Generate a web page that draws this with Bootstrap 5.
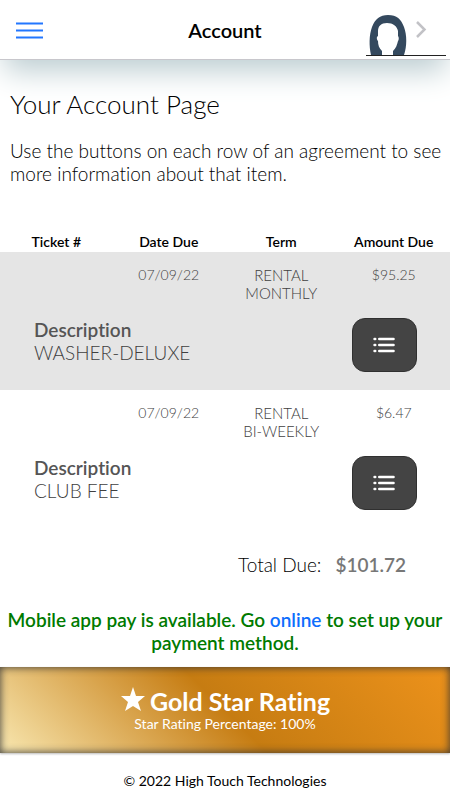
<!DOCTYPE html>
<html lang="en">
<head>
<meta charset="utf-8">
<meta name="viewport" content="width=device-width, initial-scale=1">
<title>Account</title>
<link href="https://cdn.jsdelivr.net/npm/bootstrap@5.3.0/dist/css/bootstrap.min.css" rel="stylesheet">
<style>
body { font-family: Lato, sans-serif; font-weight: 300; font-size: 19px; line-height: 23px; color: #000; background: #fff; font-variant-ligatures: none; }
.topbar { height: 59px; border-bottom: 1px solid #c8c7cc; box-sizing: content-box; box-shadow: 0 15px 30px -4px #bccdd1; }
.topbar-side { width: 84px; }
.topbar h1 { font-size: 20px; line-height: 24px; font-weight: 600; }
.profile-link { width: 80px; border-bottom: 1px solid #222; margin-bottom: 3px; }
.page-head { padding: 0 0 0 10px; }
.page-title { font-size: 26px; line-height: 32px; font-weight: 300; }
.intro { margin: 19px 0 47px; }
.agreements { table-layout: fixed; font-size: 15px; line-height: 18px; text-align: center; }
.agreements th { font-weight: 600; font-size: 14px; }
.agreement { color: #404040; }
.agreement:nth-of-type(odd) { background: #e5e5e5; }
.agreement .facts td { padding-top: 14px; height: 58px; vertical-align: top; }
.agreement .facts .figure-cell { font-size: 14px; }
.agreement .details td { height: 80px; vertical-align: top; padding-top: 8px; }
.item-text { font-size: 19px; line-height: 23px; padding-left: 34px; }
.item-text strong { color: #555; font-weight: 600; }
.btn-detail { width: 65px; height: 54px; border-radius: 13px; background: #444; border: 1px solid #303030; }
.btn-detail svg { display: block; margin: 0 auto; }
.agreement .details .action-cell { padding-right: 20px; }
.total-line { padding: 25px 44px 0 0; }
.total-label { margin-right: 14px; }
.total-value { color: #777; font-weight: 600; }
.notice { color: #007a00; font-weight: 600; margin: 0; padding: 32px 4px 13px; }
.notice a { color: #0d6efd; }
.rating { height: 86px; color: #fff; background: linear-gradient(45deg, #f8e7b0 0%, #c67c12 50%, #ed921b 100%); box-shadow: inset 0 0 8px #333, 0 1px 2px #bbb; }
.rating h2 { font-size: 25px; line-height: 28px; font-weight: 700; }
.rating p { font-size: 14px; line-height: 18px; font-weight: 400; }
footer { font-size: 14px; line-height: 20px; font-weight: 400; padding: 18px 0 8px; }
</style>
<script src="https://cdn.jsdelivr.net/npm/bootstrap@5.3.0/dist/js/bootstrap.bundle.min.js"></script>
</head>
<body>
<header class="topbar d-flex justify-content-between align-items-center">
  <div class="topbar-side">
    <button type="button" class="btn border-0 p-0 ms-3 d-flex" aria-label="Menu">
      <svg width="27" height="20" viewBox="0 0 27 20" stroke="#2377ff" stroke-width="2"><path d="M0 3.5h27M0 10.5h27M0 17.5h27"/></svg>
    </button>
  </div>
  <h1 class="m-0">Account</h1>
  <div class="topbar-side align-self-end">
    <a href="#profile" class="profile-link d-flex" aria-label="Profile">
      <svg width="80" height="40" viewBox="0 0 80 40"><path fill="#34495e" d="M5 40C3 31 3 20 6 12C9 4 14 0 22 0C31 0 35 4 38 12C41 20 41 31 38 40H27V36C30 33 31 30 32 26C33 25 33 22 32 21V16C31 11 27 8 21 8C15 8 12 11 12 16V21C10 22 11 25 12 26C12 30 13 33 16 36V40Z"/><path d="M51 7l7.500 7.500-7.500 7.500" fill="none" stroke="#c2c2c6" stroke-width="2.5"/></svg>
    </a>
  </div>
</header>
<main>
  <section class="page-head pt-4">
    <h2 class="page-title mb-0 pt-1">Your Account Page</h2>
    <p class="intro">Use the buttons on each row of an agreement to see more information about that item.</p>
  </section>
  <table class="agreements w-100">
    <thead><tr><th scope="col">Ticket #</th><th scope="col">Date Due</th><th scope="col">Term</th><th scope="col">Amount Due</th></tr></thead>
    <tbody class="agreement">
      <tr class="facts"><td></td><td class="figure-cell">07/09/22</td><td>RENTAL<br>MONTHLY</td><td class="figure-cell">$95.25</td></tr>
      <tr class="details"><td colspan="3" class="item-text text-start"><strong>Description</strong><br>WASHER-DELUXE</td>
        <td class="action-cell"><button type="button" class="btn btn-detail p-0" aria-label="Washer details"><svg width="22" height="16" viewBox="0 0 22 16" stroke="#fff" stroke-width="2.6" stroke-linecap="round"><path d="M1.6 2h.6M6.3 2h14.2M1.6 8h.6M6.3 8h14.2M1.6 14h.6M6.3 14h14.2"/></svg></button></td></tr>
    </tbody>
    <tbody class="agreement">
      <tr class="facts"><td></td><td class="figure-cell">07/09/22</td><td>RENTAL<br>BI-WEEKLY</td><td class="figure-cell">$6.47</td></tr>
      <tr class="details"><td colspan="3" class="item-text text-start"><strong>Description</strong><br>CLUB FEE</td>
        <td class="action-cell"><button type="button" class="btn btn-detail p-0" aria-label="Club fee details"><svg width="22" height="16" viewBox="0 0 22 16" stroke="#fff" stroke-width="2.6" stroke-linecap="round"><path d="M1.6 2h.6M6.3 2h14.2M1.6 8h.6M6.3 8h14.2M1.6 14h.6M6.3 14h14.2"/></svg></button></td></tr>
    </tbody>
  </table>
  <p class="total-line text-end mb-0"><span class="total-label">Total Due:</span><strong class="total-value">$101.72</strong></p>
  <p class="notice text-center">Mobile app pay is available. Go <a href="#online" class="text-decoration-none">online</a> to set up your payment method.</p>
  <section class="rating d-flex flex-column justify-content-center align-items-center">
    <h2 class="mb-0 d-flex"><svg class="me-1" width="26" height="26" viewBox="0 0 26 26" fill="#fff"><path d="M13 0l3 9h9l-7 6 3 9-8-5-8 5 3-9-7-6h9z"/></svg>Gold Star Rating</h2>
    <p class="m-0">Star Rating Percentage: 100%</p>
  </section>
</main>
<footer class="text-center">© 2022 High Touch Technologies</footer>
</body>
</html>
